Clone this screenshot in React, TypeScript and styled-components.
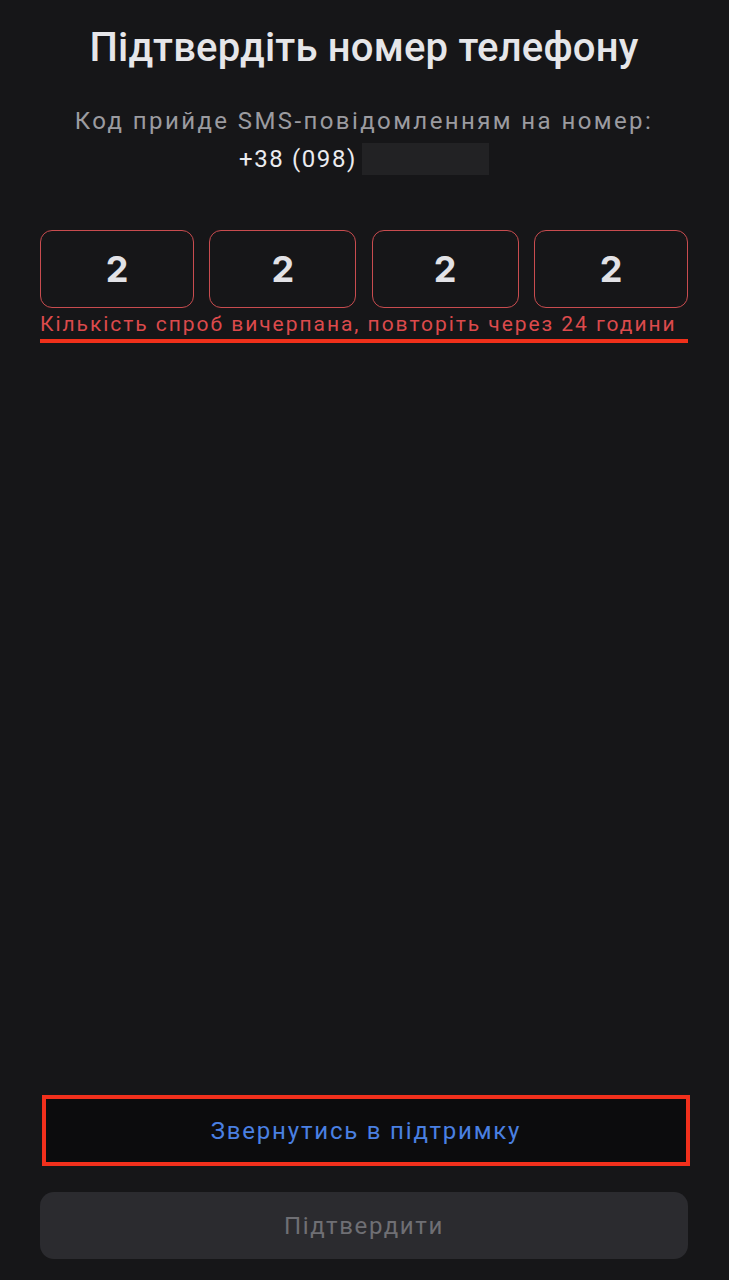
import React from 'react'
import styled, { createGlobalStyle } from 'styled-components'

const GlobalStyle = createGlobalStyle`
  html, body {
    margin: 0;
    padding: 0;
    background: #161618;
  }
  * {
    box-sizing: border-box;
  }
`

const Screen = styled.div`
  min-height: 1280px;
  display: flex;
  flex-direction: column;
  padding: 22px 41px 21px 40px;
  background: #161618;
  font-family: Roboto, "Noto Sans", sans-serif;
`

const Title = styled.h1`
  margin: 0;
  text-align: center;
  font-size: 40px;
  font-weight: 500;
  line-height: 52px;
  color: #e6e6e9;
  letter-spacing: 0.2px;
`

const Subtitle = styled.p`
  margin: 28px 0 0;
  text-align: center;
  font-size: 24px;
  line-height: 38px;
  color: #9b9ba0;
  letter-spacing: 2.4px;
`

const Phone = styled.span`
  color: #ececef;
  letter-spacing: 1.6px;
`

const Hidden = styled.span`
  display: inline-block;
  width: 127px;
  height: 32px;
  margin-left: 5px;
  vertical-align: -8px;
  background: #222224;
`

const CodeRow = styled.div`
  display: grid;
  grid-template-columns: 154px 147px 147px 154px;
  justify-content: space-between;
  margin-top: 52px;
`

const CodeBox = styled.div`
  height: 78px;
  border: 1.5px solid #c94c4f;
  border-radius: 12px;
  display: flex;
  align-items: center;
  justify-content: center;
  font-family: Inter, Roboto, sans-serif;
  font-size: 36px;
  font-weight: 700;
  color: #e2e2e6;
`

const ErrorLine = styled.div`
  margin-top: 2px;
  padding-bottom: 1px;
  border-bottom: 4px solid #f0301a;
  font-size: 21px;
  line-height: 28px;
  color: #dc4a4c;
  letter-spacing: 1.95px;
  white-space: nowrap;
`

const Actions = styled.div`
  margin-top: auto;
  display: flex;
  flex-direction: column;
  gap: 26px;
`

const SupportButton = styled.button`
  height: 71px;
  border: 4px solid #f2301c;
  border-radius: 0;
  background: #0c0c0d;
  color: #4a80e2;
  font-family: Roboto, sans-serif;
  font-size: 24px;
  letter-spacing: 1.8px;
  margin: 0 -2px 0 2px;
`

const ConfirmButton = styled.button`
  height: 67px;
  border: none;
  border-radius: 14px;
  background: #2b2b2f;
  color: #6f6f74;
  font-family: Roboto, sans-serif;
  font-size: 24px;
  letter-spacing: 1.6px;
`

const digits = ['2', '2', '2', '2']

export default function App() {
  return (
    <>
      <GlobalStyle />
      <Screen>
        <Title>Підтвердіть номер телефону</Title>
        <Subtitle>
          Код прийде SMS-повідомленням на номер:
          <br />
          <Phone>+38 (098)</Phone>
          <Hidden />
        </Subtitle>
        <CodeRow>
          {digits.map((d, i) => (
            <CodeBox key={i}>{d}</CodeBox>
          ))}
        </CodeRow>
        <ErrorLine>Кількість спроб вичерпана, повторіть через 24 години</ErrorLine>
        <Actions>
          <SupportButton>Звернутись в підтримку</SupportButton>
          <ConfirmButton disabled>Підтвердити</ConfirmButton>
        </Actions>
      </Screen>
    </>
  )
}
